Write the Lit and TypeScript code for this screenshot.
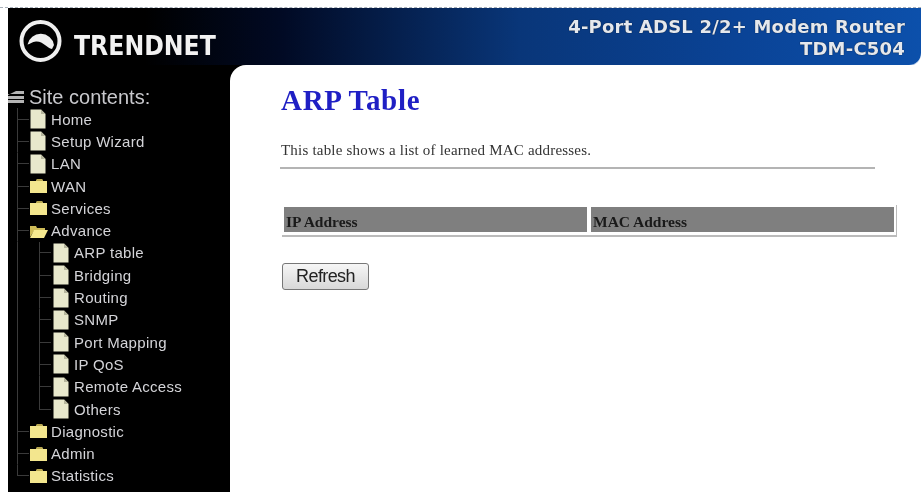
import { LitElement, html, css } from "lit";
import { customElement } from "lit/decorators.js";

type Kind = "page" | "folder" | "open";
const top1: [string, Kind][] = [["Home", "page"], ["Setup Wizard", "page"], ["LAN", "page"], ["WAN", "folder"], ["Services", "folder"], ["Advance", "open"]];
const sub: string[] = ["ARP table", "Bridging", "Routing", "SNMP", "Port Mapping", "IP QoS", "Remote Access", "Others"];
const top2: string[] = ["Diagnostic", "Admin", "Statistics"];

const icon = (k: Kind) => {
  if (k === "page")
    return html`<svg class="ic" viewBox="0 0 16 20" width="16" height="20"><path d="M0.5 0.5h10.5l4.5 4.5v14.5H0.5z" fill="#e8e8cc"/><path d="M11 0.5v4.5h4.5z" fill="#b5b59c"/></svg>`;
  if (k === "folder")
    return html`<svg class="ic" viewBox="0 0 19 16" width="19" height="16"><path d="M1 3h6l1-2h5l1 2h4v12H1z" fill="#f3e68e"/><path d="M8 1h5l1 2H7z" fill="#b9a850"/></svg>`;
  return html`<svg class="ic" viewBox="0 0 19 16" width="19" height="16"><path d="M1 3h6l1 2h8v3H5l-4 6z" fill="#cdbb58"/><path d="M5 7h14l-4 8H1z" fill="#f6e98f"/></svg>`;
};

@customElement("app-root")
export class AppRoot extends LitElement {
  static styles = css`
    :host { display: block; width: 921px; height: 498px; background: #fff; overflow: hidden; }
    .page { box-sizing: border-box; height: 498px; padding: 7px 0 0 8px; display: flex; flex-direction: column; filter: blur(0.55px); }
    .edge { height: 0; border-top: 1px dashed #a8b0ba; margin: 0 0 0 -8px; }
    header { height: 57px; flex: none; display: flex; justify-content: space-between; align-items: center; padding: 0 16px 0 11px; border-bottom-right-radius: 12px;
      background: linear-gradient(90deg, #000 15%, #010a24 30%, #093679 56%, #0a4396 80%, #0c50ab 100%); box-shadow: 0 1px 0 #bcd0ea; }
    .logo { display: flex; align-items: center; gap: 11px; align-self: flex-start; margin-top: 11px; }
    .brand { font: bold 27px/30px "DejaVu Sans", sans-serif; color: #f2f2f2; transform: scaleX(0.875); transform-origin: left; margin-top: 10px; width: 136px; white-space: nowrap; }
    .title { text-align: right; font: bold 18px/22px "DejaVu Sans", sans-serif; color: #e4e8ee; margin-top: 3px; letter-spacing: 0.2px; text-shadow: 0 0 1px #000; }
    .body { flex: 1; display: flex; min-height: 0; background: linear-gradient(90deg, #000 240px, #fff 240px); margin-bottom: 6px; }
    nav { width: 222px; flex: none; background: #000; padding-top: 21px; box-sizing: border-box; font: 15px "Liberation Sans", sans-serif; letter-spacing: 0.3px; color: #d4d4d8; }
    .head { display: flex; align-items: center; height: 22px; font-size: 20px; letter-spacing: 0; color: #c8c8cc; gap: 5px; }
    .tree { margin-left: 9px; }
    .row { display: flex; align-items: center; height: 22.3px; gap: 5px; white-space: nowrap; }
    .conn { align-self: stretch; flex: none; width: 12px; margin-right: -4px; background: linear-gradient(#3a3a3a, #3a3a3a) left / 1px 100% no-repeat, linear-gradient(#3a3a3a, #3a3a3a) left 50% / 100% 1px no-repeat; }
    .last .conn { background: linear-gradient(#3a3a3a, #3a3a3a) left top / 1px 50% no-repeat, linear-gradient(#3a3a3a, #3a3a3a) left 50% / 100% 1px no-repeat; }
    .ic { flex: none; }
    .row.f .ic { margin-left: -1px; margin-right: -2px; }
    .subwrap { border-left: 1px solid #3a3a3a; }
    .subtree { margin-left: 21px; }
    .subtree .conn { margin-right: -3px; }
    main { flex: 1; background: #fff; border-top-left-radius: 16px; padding: 0 24px 0 50px; }
    h1 { margin: 20px 0 0; font: bold 29px/30px "Liberation Serif", serif; color: #1f1fc4; letter-spacing: 0.7px; padding-left: 1px; }
    p { margin: 27px 0 0; padding-left: 1px; font: 15px/16px "Liberation Serif", serif; color: #333; letter-spacing: 0.2px; white-space: nowrap; }
    hr { margin: 9px 0 0; border: 0; border-top: 2px solid #b4b4b4; width: 595px; }
    .tbl { margin: 36px 0 0 2px; width: 615px; display: grid; grid-template-columns: 303px 1fr; gap: 4px; padding: 2px 2px 3px 2px; box-sizing: border-box; border-right: 1px solid #bbb; border-bottom: 2px solid #bbb; }
    .th { background: #7f7f7f; height: 25px; font: bold 15.5px/30px "Liberation Serif", serif; color: #1a1a1a; padding-left: 2px; overflow: hidden; }
    button { display: block; margin: 26px 0 0 2px; width: 87px; height: 27px; border: 1px solid #777; border-radius: 3px; background: linear-gradient(#f6f6f6, #d8d8d8); font: 18px "Liberation Sans", sans-serif; letter-spacing: -0.6px; color: #222; padding: 0; }
  `;

  private row(label: string, k: Kind, last = false) {
    return html`<div class="row ${k === "page" ? "" : "f"} ${last ? "last" : ""}"><span class="conn"></span>${icon(k)}<span>${label}</span></div>`;
  }

  render() {
    return html`<div class="page">
      <div class="edge"></div>
      <header>
        <div class="logo">
          <svg width="44" height="44" viewBox="0 0 44 44">
            <circle cx="21.5" cy="22" r="19" fill="none" stroke="#efefef" stroke-width="4"/>
            <path d="M8.5 25.5A13.5 13.5 0 0 1 35 26L33 30C28 29 24 22 17 22.5C13 23 11 25 8.5 25.5Z" fill="#efefef"/>
          </svg>
          <span class="brand">TRENDNET</span>
        </div>
        <div class="title">4-Port ADSL 2/2+ Modem Router<br />TDM-C504</div>
      </header>
      <div class="body">
        <nav>
          <div class="head">
            <svg width="16" height="13" viewBox="0 0 16 13"><path d="M0 4 8 0h8v3H0zM0 5h16v3H0zM0 9h16v3H0z" fill="#b4b4b4"/></svg>
            <span>Site contents:</span>
          </div>
          <div class="tree">
            ${top1.map(([l, k]) => this.row(l, k))}
            <div class="subwrap"><div class="subtree">${sub.map((l, i) => this.row(l, "page", i === sub.length - 1))}</div></div>
            ${top2.map((l, i) => this.row(l, "folder", i === top2.length - 1))}
          </div>
        </nav>
        <main>
          <h1>ARP Table</h1>
          <p>This table shows a list of learned MAC addresses.</p>
          <hr />
          <div class="tbl"><div class="th">IP Address</div><div class="th">MAC Address</div></div>
          <button>Refresh</button>
        </main>
      </div>
    </div>`;
  }
}
